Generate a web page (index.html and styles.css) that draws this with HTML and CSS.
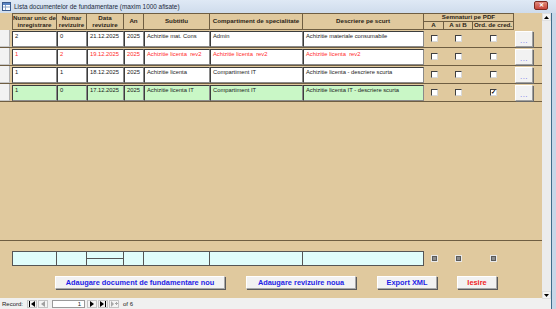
FILE: index.html
```html
<!DOCTYPE html>
<html lang="ro">
<head>
    <meta charset="UTF-8">
    <title>Lista documentelor de fundamentare</title>
    <link rel="stylesheet" href="styles.css">
</head>
<body>
    <div class="window">
        <div class="titlebar">
            <svg class="ticon" width="9" height="9" viewBox="0 0 9 9">
                <rect x="0.5" y="0.5" width="8" height="8" fill="#fff" stroke="#3a5a8c"/>
                <rect x="1" y="1" width="7" height="2" fill="#5b86c5"/>
                <line x1="1" y1="5" x2="8" y2="5" stroke="#8aa4c8"/>
                <line x1="3.5" y1="3" x2="3.5" y2="8" stroke="#8aa4c8"/>
            </svg>
            <span class="ttext">Lista documentelor de fundamentare (maxim 1000 afisate)</span>
            <span class="close">✕</span>
        </div>

        <div class="body">
            <div class="formcol">
                <div class="form">
                    <!-- header -->
                    <div class="grid head">
                        <div class="h-sel"></div>
                        <div class="hc">Numar unic de inregistrare</div>
                        <div class="hc">Numar revizuire</div>
                        <div class="hc">Data revizuire</div>
                        <div class="hc">An</div>
                        <div class="hc">Subtitlu</div>
                        <div class="hc">Compartiment de specialitate</div>
                        <div class="hc">Descriere pe scurt</div>
                        <div class="hc group">Semnaturi pe PDF</div>
                        <div class="hc sub">A</div>
                        <div class="hc sub">A si B</div>
                        <div class="hc sub">Ord. de cred.</div>
                    </div>

                    <!-- rows -->
                    <div class="grid row">
                        <div class="sel"></div>
                        <div class="fld">2</div>
                        <div class="fld">0</div>
                        <div class="fld">21.12.2025</div>
                        <div class="fld">2025</div>
                        <div class="fld">Achizitie mat. Cons</div>
                        <div class="fld">Admin</div>
                        <div class="fld">Achizitie materiale consumabile</div>
                        <div class="cbcell"><span class="cb"></span></div>
                        <div class="cbcell"><span class="cb"></span></div>
                        <div class="cbcell"><span class="cb"></span></div>
                        <div class="btncell"><span class="dots">...</span></div>
                    </div>
                    <div class="grid row red">
                        <div class="sel"></div>
                        <div class="fld">1</div>
                        <div class="fld">2</div>
                        <div class="fld">19.12.2025</div>
                        <div class="fld">2025</div>
                        <div class="fld">Achizitie licenta&nbsp; rev2</div>
                        <div class="fld">Achizitie licenta&nbsp; rev2</div>
                        <div class="fld">Achizitie licenta&nbsp; rev2</div>
                        <div class="cbcell"><span class="cb"></span></div>
                        <div class="cbcell"><span class="cb"></span></div>
                        <div class="cbcell"><span class="cb"></span></div>
                        <div class="btncell"><span class="dots">...</span></div>
                    </div>
                    <div class="grid row">
                        <div class="sel"></div>
                        <div class="fld">1</div>
                        <div class="fld">1</div>
                        <div class="fld">18.12.2025</div>
                        <div class="fld">2025</div>
                        <div class="fld">Achizitie licenta</div>
                        <div class="fld">Compartiment IT</div>
                        <div class="fld">Achizitie licenta - descriere scurta</div>
                        <div class="cbcell"><span class="cb"></span></div>
                        <div class="cbcell"><span class="cb"></span></div>
                        <div class="cbcell"><span class="cb"></span></div>
                        <div class="btncell"><span class="dots">...</span></div>
                    </div>
                    <div class="grid row green">
                        <div class="sel"></div>
                        <div class="fld">1</div>
                        <div class="fld">0</div>
                        <div class="fld">17.12.2025</div>
                        <div class="fld">2025</div>
                        <div class="fld">Achizitie licenta IT</div>
                        <div class="fld">Compartiment IT</div>
                        <div class="fld">Achizitie licenta IT - descriere scurta</div>
                        <div class="cbcell"><span class="cb"></span></div>
                        <div class="cbcell"><span class="cb"></span></div>
                        <div class="cbcell"><span class="cb checked">✓</span></div>
                        <div class="btncell"><span class="dots">...</span></div>
                    </div>

                    <div class="empty"></div>

                    <!-- footer -->
                    <div class="footer">
                        <div class="grid totals">
                            <div></div>
                            <div class="tc"></div>
                            <div class="tc"></div>
                            <div class="tc split"><span></span><span></span></div>
                            <div class="tc"></div>
                            <div class="tc"></div>
                            <div class="tc"></div>
                            <div class="tc"></div>
                            <div class="cbcell"><span class="sq"></span></div>
                            <div class="cbcell"><span class="sq"></span></div>
                            <div class="cbcell"><span class="sq"></span></div>
                        </div>
                        <div class="buttons">
                            <button class="btn w170">Adaugare document de fundamentare nou</button>
                            <button class="btn w110">Adaugare revizuire noua</button>
                            <button class="btn w60">Export XML</button>
                            <button class="btn w40 exit">Iesire</button>
                        </div>
                    </div>
                </div>

                <div class="navbar">
                    <span class="nlabel">Record:</span>
                    <span class="nbtn"><svg width="8" height="6" viewBox="0 0 8 6"><rect x="1" y="0" width="1" height="6" fill="#000"/><polygon points="7,0 7,6 3,3" fill="#000"/></svg></span>
                    <span class="nbtn"><svg width="8" height="6" viewBox="0 0 8 6"><polygon points="6,0 6,6 2,3" fill="#a0a0a0"/></svg></span>
                    <span class="ninput">1</span>
                    <span class="nbtn"><svg width="8" height="6" viewBox="0 0 8 6"><polygon points="2,0 2,6 6,3" fill="#000"/></svg></span>
                    <span class="nbtn"><svg width="8" height="6" viewBox="0 0 8 6"><polygon points="1,0 1,6 5,3" fill="#000"/><rect x="6" y="0" width="1" height="6" fill="#000"/></svg></span>
                    <span class="nbtn"><svg width="8" height="6" viewBox="0 0 8 6"><polygon points="1,0 1,6 4,3" fill="#a8a8a8"/><rect x="5" y="2" width="3" height="1" fill="#a8a8a8"/><rect x="6" y="1" width="1" height="3" fill="#a8a8a8"/></svg></span>
                    <span class="nof">of 6</span>
                </div>
            </div>

            <div class="vscroll">
                <span class="sbtn"><svg width="5" height="3" viewBox="0 0 5 3"><polygon points="0,3 5,3 2.5,0" fill="#000"/></svg></span>
                <span class="strack"></span>
                <span class="sbtn"><svg width="5" height="3" viewBox="0 0 5 3"><polygon points="0,0 5,0 2.5,3" fill="#000"/></svg></span>
                <span class="sfoot"></span>
            </div>
            <div class="edge"></div>
        </div>
    </div>
</body>
</html>
```

FILE: styles.css
```css
html, body {
    margin: 0;
    padding: 0;
}
body {
    font-family: "Liberation Sans", Arial, sans-serif;
    width: 556px;
    height: 309px;
    overflow: hidden;
    background: #f0f0f0;
}
.window {
    width: 556px;
    height: 309px;
    display: flex;
    flex-direction: column;
}

/* title bar */
.titlebar {
    height: 13px;
    display: flex;
    align-items: center;
    background: linear-gradient(#dfe9f5, #cfdcec);
    position: relative;
}
.ticon {
    margin-left: 2px;
    margin-right: 3px;
}
.ttext {
    font-size: 6.4px;
    color: #1b2a40;
    white-space: nowrap;
}
.close {
    position: absolute;
    left: 534px;
    top: 1px;
    width: 14px;
    height: 9px;
    box-sizing: border-box;
    border: 1px solid #7a2a22;
    border-radius: 2px;
    background: linear-gradient(#e08a7c, #c8453a);
    color: #fff;
    font-size: 6px;
    font-weight: bold;
    line-height: 7px;
    text-align: center;
}

.body {
    flex: 1;
    display: flex;
    min-height: 0;
}
.formcol {
    width: 542px;
    display: flex;
    flex-direction: column;
}
.form {
    height: 285px;
    background: #e0c99e;
    display: flex;
    flex-direction: column;
}

/* shared column layout */
.grid {
    display: grid;
    grid-template-columns: 12px 45px 30px 37px 20px 66px 93px 121px 20px 29px 41px 28px;
}

/* header */
.head {
    height: 17px;
    grid-template-rows: 8px 9px;
}
.h-sel {
    grid-row: 1 / 3;
}
.hc {
    grid-row: 1 / 3;
    border: 1px solid #6f5e42;
    border-left: none;
    font-size: 6.2px;
    font-weight: bold;
    color: #2a2418;
    text-align: center;
    line-height: 6.6px;
    display: flex;
    align-items: center;
    justify-content: center;
    overflow: hidden;
}
.hc:nth-child(2) {
    border-left: 1px solid #6f5e42;
}
.hc.group {
    grid-row: 1;
    grid-column: 9 / 12;
    border-bottom: none;
}
.hc.sub {
    grid-row: 2;
}

/* detail rows */
.row {
    height: 18px;
    box-sizing: border-box;
    border-bottom: 1px solid #6f5e42;
    align-items: center;
}
.sel {
    width: 10px;
    height: 17px;
    box-sizing: border-box;
    background: #f2f2f2;
    border-right: 1px solid #b4b4b4;
    border-bottom: 1px solid #c8c8c8;
}
.fld {
    height: 16px;
    box-sizing: border-box;
    background: #fff;
    border: 1px solid #8a8a8a;
    border-top-color: #3c3c3c;
    border-left-color: #3c3c3c;
    font-size: 5.8px;
    line-height: 7px;
    padding: 1px 0 0 2px;
    color: #1a1a1a;
    white-space: nowrap;
    overflow: hidden;
}
.red .fld {
    color: #ff2a2a;
}
.green .fld {
    background: #c9f7c6;
}
.cbcell {
    display: flex;
    justify-content: center;
    align-items: center;
}
.cb {
    width: 7px;
    height: 7px;
    box-sizing: border-box;
    background: #fff;
    border: 1px solid #d8d8d8;
    border-top-color: #404040;
    border-left-color: #404040;
    font-size: 6px;
    line-height: 5px;
    font-weight: bold;
    color: #000;
    text-align: center;
}
.btncell {
    display: flex;
    align-items: center;
}
.dots {
    margin-left: 1px;
    width: 18px;
    height: 16px;
    box-sizing: border-box;
    padding-top: 5px;
    background: #f2f2f2;
    border: 1px solid #a0a0a0;
    border-top-color: #fff;
    border-left-color: #fff;
    box-shadow: 1px 1px 0 #6a6a6a;
    color: #7070e8;
    font-size: 8px;
    letter-spacing: 0.5px;
    text-align: center;
    line-height: 8px;
}

.empty {
    flex: 1;
}

/* footer */
.footer {
    height: 58px;
    box-sizing: border-box;
    border-top: 1px solid #6f5e42;
    padding-top: 10px;
}
.totals {
    height: 15px;
}
.tc {
    background: #e0fdfb;
    border: 1px solid #555;
    border-left: none;
}
.tc:nth-child(2) {
    border-left: 1px solid #555;
}
.tc.split {
    display: flex;
    flex-direction: column;
}
.tc.split span {
    flex: 1;
}
.tc.split span:first-child {
    border-bottom: 1px solid #555;
}
.sq {
    width: 7px;
    height: 7px;
    box-sizing: border-box;
    background: #8c8c8c;
    border: 1px solid #e8e8e8;
    box-shadow: inset 0 0 0 1px #5a5a5a;
}
.buttons {
    display: flex;
    gap: 21px;
    padding-left: 55px;
    margin-top: 10px;
}
.btn {
    height: 13px;
    padding: 0;
    box-sizing: border-box;
    background: #f2f2f2;
    border: 1px solid #a8a8a8;
    border-top-color: #fff;
    border-left-color: #fff;
    box-shadow: 1px 1px 0 #5a5a5a;
    font-family: "Liberation Sans", Arial, sans-serif;
    font-size: 7.4px;
    font-weight: bold;
    color: #1e1ee6;
}
.w170 { width: 170px; }
.w110 { width: 110px; }
.w60 { width: 60px; }
.w40 { width: 40px; margin-left: -1px; }
.btn.exit {
    color: #f01e1e;
}

/* record navigation */
.navbar {
    height: 11px;
    display: flex;
    align-items: center;
    background: #f0f0f0;
    font-size: 6px;
    color: #222;
}
.nlabel {
    margin-left: 2px;
    margin-right: 4px;
}
.nbtn {
    width: 10px;
    height: 8px;
    margin-right: 1px;
    box-sizing: border-box;
    border: 1px solid #c4c4c4;
    background: #f4f4f4;
    display: flex;
    align-items: center;
    justify-content: center;
}
.ninput {
    width: 33px;
    height: 8px;
    box-sizing: border-box;
    margin: 0 2px 0 3px;
    background: #fff;
    border: 1px solid #9a9a9a;
    text-align: right;
    padding-right: 3px;
    line-height: 7px;
}
.nof {
    margin-left: 3px;
}

/* vertical scrollbar */
.vscroll {
    width: 9px;
    display: flex;
    flex-direction: column;
    background: #f0f0f0;
}
.sbtn {
    height: 8px;
    display: flex;
    align-items: center;
    justify-content: center;
    background: #f4f4f4;
    border: 1px solid #e0e0e0;
    box-sizing: border-box;
}
.strack {
    flex: 1;
    background: #ececec;
}
.sfoot {
    height: 10px;
}
.edge {
    width: 5px;
    box-sizing: border-box;
    border-left: 1px solid #3f6d8a;
    background: #c8d7e8;
}
```
